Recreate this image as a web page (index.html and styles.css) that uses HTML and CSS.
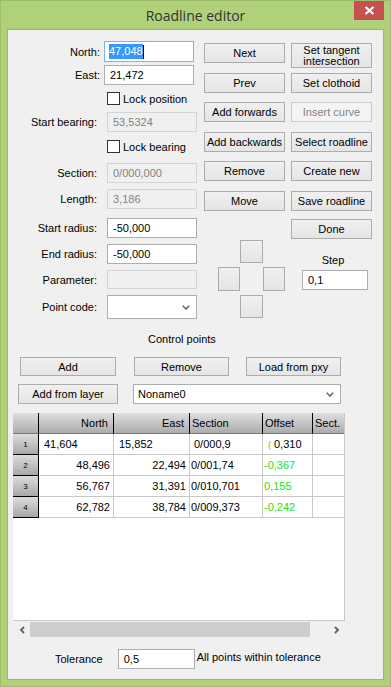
FILE: index.html
```html
<!DOCTYPE html>
<html lang="en">
<head>
    <meta charset="UTF-8">
    <meta name="viewport" content="width=device-width, initial-scale=1.0">
    <title>Roadline editor</title>
    <link rel="stylesheet" href="styles.css">
</head>
<body>
    <div class="window">
        <div class="titlebar">
            <span></span>
            <div class="title">Roadline editor</div>
            <div class="close">
                <svg width="11" height="9" viewBox="0 0 11 9"><path d="M1.5 1 L9.5 8 M9.5 1 L1.5 8" stroke="#fff" stroke-width="2.2"/></svg>
            </div>
        </div>

        <div class="client">
            <div class="top">
                <div class="fields">
                    <div class="field wide north">
                        <span class="lbl">North:</span>
                        <div class="edit focus"><span class="sel">47,048</span><span class="caret"></span></div>
                    </div>
                    <div class="field wide">
                        <span class="lbl">East:</span>
                        <div class="edit">21,472</div>
                    </div>
                    <div class="check"><span class="box"></span>Lock position</div>
                    <div class="field">
                        <span class="lbl">Start bearing:</span>
                        <div class="edit disabled">53,5324</div>
                    </div>
                    <div class="check"><span class="box"></span>Lock bearing</div>
                    <div class="field">
                        <span class="lbl">Section:</span>
                        <div class="edit disabled">0/000,000</div>
                    </div>
                    <div class="field">
                        <span class="lbl">Length:</span>
                        <div class="edit disabled">3,186</div>
                    </div>
                    <div class="field">
                        <span class="lbl">Start radius:</span>
                        <div class="edit">-50,000</div>
                    </div>
                    <div class="field">
                        <span class="lbl">End radius:</span>
                        <div class="edit">-50,000</div>
                    </div>
                    <div class="field">
                        <span class="lbl">Parameter:</span>
                        <div class="edit disabled short"></div>
                    </div>
                    <div class="field">
                        <span class="lbl">Point code:</span>
                        <div class="edit combo">
                            <svg class="chev" width="8" height="5" viewBox="0 0 8 5"><path d="M0.8 0.8 L4 4 L7.2 0.8" fill="none" stroke="#606060" stroke-width="1.5"/></svg>
                        </div>
                    </div>
                </div>

                <div class="actions">
                    <button class="btn">Next</button>
                    <button class="btn tall">Set tangent<br>intersection</button>
                    <button class="btn">Prev</button>
                    <button class="btn">Set clothoid</button>
                    <button class="btn">Add forwards</button>
                    <button class="btn off">Insert curve</button>
                    <button class="btn">Add backwards</button>
                    <button class="btn">Select roadline</button>
                    <button class="btn">Remove</button>
                    <button class="btn">Create new</button>
                    <button class="btn">Move</button>
                    <button class="btn">Save roadline</button>
                    <button class="btn done">Done</button>

                    <div class="pad">
                        <span></span><button class="btn sq"></button><span></span>
                        <button class="btn sq"></button><span></span><button class="btn sq"></button>
                        <span></span><button class="btn sq"></button><span></span>
                    </div>

                    <div class="step">
                        <div class="step-lbl">Step</div>
                        <div class="edit step-edit">0,1</div>
                    </div>
                </div>
            </div>

            <div class="cp-title">Control points</div>

            <div class="btn-row">
                <button class="btn b-add">Add</button>
                <button class="btn b-remove">Remove</button>
                <button class="btn b-load">Load from pxy</button>
            </div>

            <div class="layer-row">
                <button class="btn b-layer">Add from layer</button>
                <div class="edit combo layer-combo">Noname0
                    <svg class="chev" width="8" height="5" viewBox="0 0 8 5"><path d="M0.8 0.8 L4 4 L7.2 0.8" fill="none" stroke="#606060" stroke-width="1.5"/></svg>
                </div>
            </div>

            <div class="grid-box">
                <div class="grid-row head">
                    <div class="cell rh"></div>
                    <div class="cell c-north r">North</div>
                    <div class="cell c-east r">East</div>
                    <div class="cell c-sec">Section</div>
                    <div class="cell c-off">Offset</div>
                    <div class="cell c-sect">Sect.</div>
                </div>
                <div class="grid-row">
                    <div class="cell rh">1</div>
                    <div class="cell c-north first">41,604</div>
                    <div class="cell c-east first">15,852</div>
                    <div class="cell c-sec first">0/000,9</div>
                    <div class="cell c-off first"><span class="green paren">(</span>0,310</div>
                    <div class="cell c-sect"></div>
                </div>
                <div class="grid-row">
                    <div class="cell rh">2</div>
                    <div class="cell c-north r">48,496</div>
                    <div class="cell c-east r">22,494</div>
                    <div class="cell c-sec">0/001,74</div>
                    <div class="cell c-off green">-0,367</div>
                    <div class="cell c-sect"></div>
                </div>
                <div class="grid-row">
                    <div class="cell rh">3</div>
                    <div class="cell c-north r">56,767</div>
                    <div class="cell c-east r">31,391</div>
                    <div class="cell c-sec">0/010,701</div>
                    <div class="cell c-off green">0,155</div>
                    <div class="cell c-sect"></div>
                </div>
                <div class="grid-row">
                    <div class="cell rh">4</div>
                    <div class="cell c-north r">62,782</div>
                    <div class="cell c-east r">38,784</div>
                    <div class="cell c-sec">0/009,373</div>
                    <div class="cell c-off green">-0,242</div>
                    <div class="cell c-sect"></div>
                </div>
            </div>

            <div class="hscroll">
                <span class="arrow">
                    <svg width="6" height="8" viewBox="0 0 6 8"><path d="M5 1 L2 4 L5 7" fill="none" stroke="#606060" stroke-width="1.8"/></svg>
                </span>
                <span class="thumb"></span>
                <span class="track"></span>
                <span class="arrow">
                    <svg width="6" height="8" viewBox="0 0 6 8"><path d="M1 1 L4 4 L1 7" fill="none" stroke="#606060" stroke-width="1.8"/></svg>
                </span>
            </div>

            <div class="tol">
                <span class="tol-lbl">Tolerance</span>
                <div class="edit tol-edit">0,5</div>
                <span class="tol-msg">All points within tolerance</span>
            </div>
        </div>
    </div>
</body>
</html>
```

FILE: styles.css
```css
* {
    box-sizing: border-box;
}

body {
    margin: 0;
    font-family: "Liberation Sans", Arial, sans-serif;
    font-size: 11px;
    color: #000;
}

.window {
    width: 391px;
    height: 687px;
    background-color: #afd17a;
    border: 1px solid #9dbd6a;
}

/* title bar */
.titlebar {
    height: 29px;
    display: grid;
    grid-template-columns: 1fr auto 1fr;
    padding: 0 6px;
}

.title {
    align-self: center;
    font-family: "Open Sans", "Noto Sans", sans-serif;
    font-size: 14px;
    color: #333;
}

.close {
    justify-self: end;
    width: 30px;
    height: 19px;
    background-color: #c75050;
    display: flex;
    align-items: center;
    justify-content: center;
}

.client {
    height: 649px;
    margin: 0 7px;
    background-color: #f0f0f0;
    box-shadow: 0 0 0 1px #9ab866;
}

/* upper part */
.top {
    display: flex;
    height: 289px;
}

.fields {
    width: 189px;
    padding-top: 11px;
    display: grid;
    grid-template-rows: 24px 27px 20px 28px 23px 26px 29px 26px 26px 25px 24px;
    align-items: start;
}

.field {
    display: flex;
    align-items: center;
}

.field .lbl {
    width: 89px;
    margin-right: 10px;
    text-align: right;
}

.field.wide .lbl {
    width: 92px;
    margin-right: 4px;
}

.edit {
    width: 90px;
    height: 20px;
    background-color: #fff;
    border: 1px solid #abadb3;
    padding-left: 5px;
    display: flex;
    align-items: center;
    white-space: nowrap;
}

.north .edit {
    height: 21px;
}

.edit.focus {
    border-color: #7eb4ea;
}

.sel {
    background-color: #3399ff;
    color: #fff;
    padding: 1px 0 2px;
    margin-left: -1px;
}

.caret {
    width: 1px;
    height: 14px;
    background-color: #000;
}

.edit.disabled {
    background-color: #f0f0f0;
    border-color: #d5d5d5;
    color: #838383;
}

.edit.short {
    height: 19px;
}

.edit.combo {
    height: 24px;
    position: relative;
}

.chev {
    position: absolute;
    right: 6px;
    top: 9px;
}

.check {
    display: flex;
    align-items: center;
    padding-left: 99px;
    height: 13px;
}

.box {
    width: 13px;
    height: 13px;
    background-color: #fff;
    border: 1px solid #333;
    margin-right: 3px;
}

/* button columns */
.actions {
    margin-left: 7px;
    padding-top: 13px;
    display: grid;
    grid-template-columns: 81px 81px;
    grid-template-rows: 30px 29px 30px 29px 30px 28px 21px auto;
    column-gap: 6px;
    align-items: start;
}

.btn {
    font-family: "Liberation Sans", Arial, sans-serif;
    font-size: 11px;
    color: #000;
    height: 20px;
    padding: 0;
    border: 1px solid #acacac;
    background: linear-gradient(#f0f0f0, #e5e5e5);
    line-height: 12px;
}

.btn.tall {
    height: 25px;
    line-height: 11px;
}

.btn.off {
    color: #838383;
    border-color: #c9c9c9;
    background: #f4f4f4;
}

.done {
    grid-column: 2;
    grid-row: 7;
}

.pad {
    grid-column: 1;
    grid-row: 8;
    justify-self: end;
    display: grid;
    grid-template-columns: 22px 23px 22px;
    grid-template-rows: 23px 24px 23px;
    row-gap: 4px;
}

.btn.sq {
    height: 100%;
    width: 100%;
}

.step {
    grid-column: 2;
    grid-row: 8;
    margin-top: 14px;
}

.step-lbl {
    text-align: center;
    line-height: 13px;
    padding-left: 3px;
}

.step-edit {
    width: 66px;
    margin: 3px 0 0 11px;
}

/* control points */
.cp-title {
    margin-top: 14px;
    padding-left: 140px;
    height: 13px;
    line-height: 13px;
}

.btn-row {
    display: flex;
    height: 19px;
    margin-top: 11px;
    padding-left: 12px;
}

.btn-row .btn {
    height: 19px;
}

.b-add {
    width: 96px;
}

.b-remove {
    width: 95px;
    margin-left: 18px;
}

.b-load {
    width: 95px;
    margin-left: 17px;
}

.layer-row {
    display: flex;
    height: 20px;
    margin-top: 8px;
    padding-left: 10px;
}

.b-layer {
    width: 100px;
}

.layer-combo {
    width: 208px;
    margin-left: 15px;
    padding-left: 4px;
}

.edit.layer-combo {
    height: 20px;
}

.layer-combo .chev {
    top: 7px;
}

/* grid */
.grid-box {
    margin: 9px 0 0 5px;
    width: 332px;
    height: 208px;
    background-color: #fff;
    border-bottom: 1px solid #c8c8c8;
    border-right: 1px solid #c8c8c8;
    overflow: hidden;
}

.grid-row {
    display: flex;
    height: 21px;
}

.cell {
    flex: none;
    height: 21px;
    line-height: 20px;
    padding: 0 3px;
    white-space: nowrap;
    overflow: hidden;
    border-right: 1px solid #c8c8c8;
    border-bottom: 1px solid #c8c8c8;
}

.c-north { width: 75px; }
.c-east { width: 76px; }
.c-sec { width: 73px; padding-left: 1px; }
.c-off { width: 50px; padding-left: 1px; }
.c-sect { width: 50px; }

.cell.r {
    text-align: right;
}

.cell.rh {
    width: 26px;
    background: linear-gradient(#dcdcdc, #a8a8a8);
    border-right: 1px solid #000;
    border-bottom: 1px solid #000;
    font-size: 8px;
    line-height: 22px;
    text-align: center;
}

.head .cell {
    background: linear-gradient(#dedede, #acacac);
    border-right: 1px solid #000;
    border-bottom: 1px solid #777;
    padding: 0 2px;
}

.head .cell.r {
    padding-right: 5px;
}

.cell.first {
    padding-left: 5px;
}

.cell.c-sec.first {
    padding-left: 4px;
}

.green {
    color: #1ee01e;
}

.paren {
    font-size: 9px;
    margin-right: 3px;
}

.hscroll {
    display: flex;
    margin-left: 5px;
    width: 332px;
    height: 17px;
}

.arrow {
    width: 17px;
    display: flex;
    align-items: center;
    justify-content: center;
}

.thumb {
    width: 280px;
    margin: 1px 0;
    background-color: #cdcdcd;
}

.track {
    flex: 1;
}

/* tolerance */
.tol {
    display: flex;
    align-items: flex-start;
    margin-top: 11px;
}

.tol-lbl {
    margin-left: 47px;
    line-height: 20px;
}

.tol-edit {
    width: 77px;
    margin-left: 15px;
}

.tol-msg {
    margin-left: 2px;
    padding-top: 2px;
    line-height: 13px;
}
```
